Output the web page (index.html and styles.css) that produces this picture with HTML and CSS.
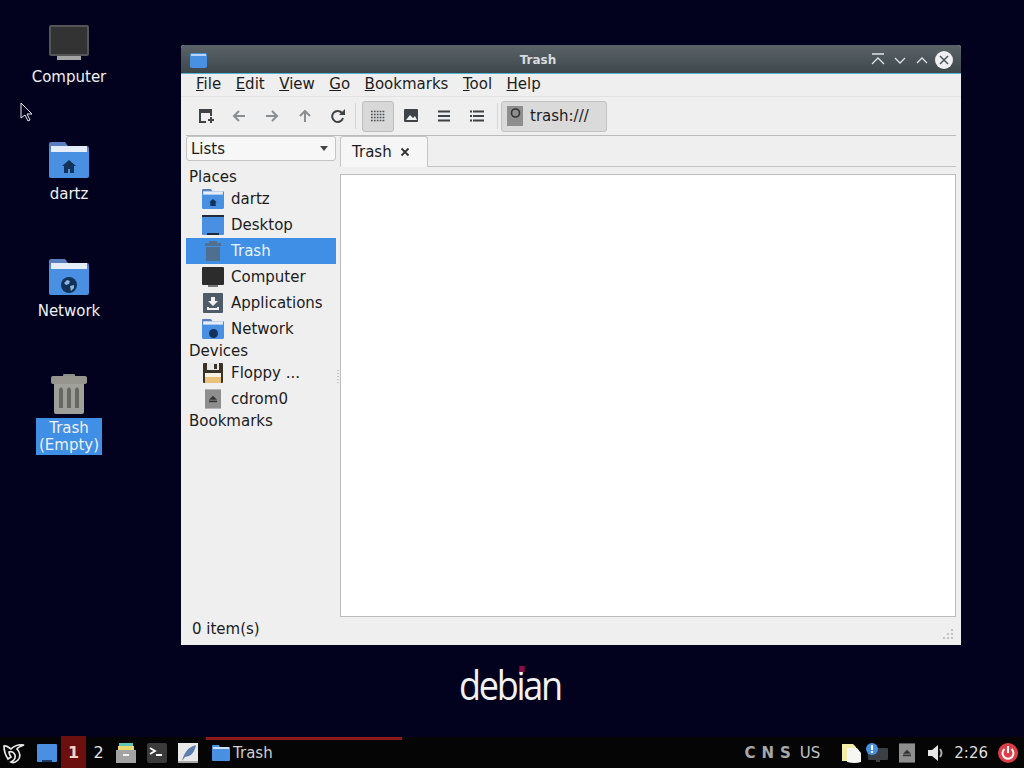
FILE: index.html
```html
<!DOCTYPE html>
<html lang="en">
<head>
<meta charset="UTF-8">
<title>Trash</title>
<link rel="stylesheet" href="styles.css">
</head>
<body>

<svg class="defs" width="0" height="0">
    <symbol id="folder" viewBox="0 0 40 36">
        <path d="M0 2q0-2 2-2h14l3 4h19q2 0 2 2v6H0z" fill="#5a7fc0"/>
        <rect x="2" y="4" width="36" height="6" fill="#e4ecf8"/>
        <path d="M0 7h40v27q0 2-2 2H2q-2 0-2-2z" fill="#4a90e2"/>
        <rect x="2" y="7" width="36" height="3" fill="#e8eef8"/>
    </symbol>
    <symbol id="monitor" viewBox="0 0 40 36">
        <rect x="0" y="0" width="40" height="31" rx="2" fill="#555558"/>
        <rect x="2" y="2" width="36" height="27" fill="#333333"/>
        <rect x="8" y="31" width="24" height="4" fill="#a4a4a4"/>
    </symbol>
    <symbol id="cd" viewBox="0 0 20 24">
        <rect width="20" height="24" fill="#8e8e8e"/>
        <path d="M10 8l5 5H5z" fill="#333"/>
        <rect x="5" y="14" width="10" height="2" fill="#333"/>
    </symbol>
</svg>

<main class="desktop">
    <div class="desk-icon icon-computer">
        <svg width="40" height="36"><use href="#monitor"/></svg>
        <span>Computer</span>
    </div>
    <div class="desk-icon icon-dartz">
        <span class="folder-wrap">
            <svg width="40" height="36"><use href="#folder"/></svg>
            <svg class="badge" width="14" height="13" viewBox="0 0 14 13"><path d="M7 0l7 6h-2v7H8V9H6v4H2V6H0z" fill="#12325a"/></svg>
        </span>
        <span>dartz</span>
    </div>
    <div class="desk-icon icon-network">
        <span class="folder-wrap">
            <svg width="40" height="36"><use href="#folder"/></svg>
            <svg class="badge" width="16" height="16" viewBox="0 0 16 16"><circle cx="8" cy="8" r="8" fill="#12325a"/><path d="M3 6l3-3 3 1-1 3-3 1zM9 9l4-1 0 3-3 3z" fill="#8fb4e0"/></svg>
        </span>
        <span>Network</span>
    </div>
    <div class="desk-icon icon-trash">
        <svg width="36" height="40" viewBox="0 0 36 40">
            <rect x="12" y="0" width="12" height="4" rx="1" fill="#8d8d88"/>
            <rect x="0" y="2" width="36" height="8" rx="2" fill="#96968f"/>
            <path d="M3 10h30v28q0 2-2 2H5q-2 0-2-2z" fill="#a0a09a"/>
            <path d="M8 15l2-2 2 2v19H8zM16 15l2-2 2 2v19h-4zM24 15l2-2 2 2v19h-4z" fill="#686862"/>
        </svg>
        <span class="selected">Trash<br>(Empty)</span>
    </div>

    <svg class="cursor" width="14" height="20" viewBox="0 0 14 20"><path d="M1 1v15l4-3 3 6 2-1-3-6h5z" fill="#02021e" stroke="#e8e8e8" stroke-width="1"/></svg>

    <div class="debian">deb<span class="debian-i">i<b></b></span>an</div>

    <section class="window">
        <div class="titlebar">
            <svg width="17" height="15" viewBox="0 0 17 15"><rect width="17" height="15" rx="2" fill="#4a90e2"/><rect x="1" y="1" width="15" height="2" fill="#b9d3f3"/></svg>
            <span class="title">Trash</span>
            <div class="wm-buttons">
                <svg width="22" height="16" viewBox="0 0 22 16"><path d="M5 2h12M5 12l6-6 6 6" fill="none" stroke="#dfe3e5" stroke-width="1.3"/></svg>
                <svg width="22" height="16" viewBox="0 0 22 16"><path d="M6 6l5 5 5-5" fill="none" stroke="#dfe3e5" stroke-width="1.3"/></svg>
                <svg width="22" height="16" viewBox="0 0 22 16"><path d="M6 11l5-5 5 5" fill="none" stroke="#dfe3e5" stroke-width="1.3"/></svg>
                <svg class="wm-close" width="18" height="18" viewBox="0 0 18 18"><circle cx="9" cy="9" r="9" fill="#eef0f1"/><path d="M5 5l8 8M13 5l-8 8" stroke="#4b5459" stroke-width="1.5"/></svg>
            </div>
        </div>

        <nav class="menubar">
            <span><u>F</u>ile</span>
            <span><u>E</u>dit</span>
            <span><u>V</u>iew</span>
            <span><u>G</u>o</span>
            <span><u>B</u>ookmarks</span>
            <span><u>T</u>ool</span>
            <span><u>H</u>elp</span>
        </nav>

        <div class="toolbar">
            <span class="tool"><svg width="16" height="16" viewBox="0 0 16 16"><path d="M1 1h13v7h-2V5H3v8h5v2H1z" fill="#3d4347"/><path d="M12 9h2v2h2v2h-2v2h-2v-2h-2v-2h2z" fill="#3d4347"/></svg></span>
            <span class="tool"><svg width="16" height="16" viewBox="0 0 16 16"><path d="M8 3L3 8l5 5M3 8h11" fill="none" stroke="#8a8e91" stroke-width="2"/></svg></span>
            <span class="tool"><svg width="16" height="16" viewBox="0 0 16 16"><path d="M8 3l5 5-5 5M13 8H2" fill="none" stroke="#8a8e91" stroke-width="2"/></svg></span>
            <span class="tool"><svg width="16" height="16" viewBox="0 0 16 16"><path d="M3 8l5-5 5 5M8 3v11" fill="none" stroke="#8a8e91" stroke-width="2"/></svg></span>
            <span class="tool"><svg width="16" height="16" viewBox="0 0 16 16"><path d="M13 10a5.500 5.500 0 1 1-1-5" fill="none" stroke="#3d4347" stroke-width="2"/><path d="M15 1v6H9z" fill="#3d4347"/></svg></span>
            <i class="tool-sep sep-view"></i>
            <span class="tool active"><svg width="14" height="12" viewBox="0 0 14 12"><path d="M0 1.500h14M0 4.500h14M0 7.500h14M0 10.500h14" stroke="#4a4f52" stroke-width="1.700" stroke-dasharray="1.700 1.200"/></svg></span>
            <span class="tool"><svg width="16" height="14" viewBox="0 0 16 14"><rect x="1" width="14" height="13" rx="1" fill="#3d4347"/><path d="M3 11l4-5 3 3 2-2 2 4z" fill="#f1f1f2"/></svg></span>
            <span class="tool"><svg width="16" height="14" viewBox="0 0 16 14"><path d="M2 2.500h12M2 7h12M2 11.500h12" stroke="#3d4347" stroke-width="2"/></svg></span>
            <span class="tool"><svg width="16" height="14" viewBox="0 0 16 14"><path d="M1 2.500h2M4 2.500h11M1 7h2M4 7h11M1 11.500h2M4 11.500h11" stroke="#3d4347" stroke-width="2"/></svg></span>
            <i class="tool-sep sep-path"></i>
            <div class="path-btn">
                <svg width="16" height="20" viewBox="0 0 16 20"><rect width="16" height="20" fill="#8e8e8e"/><circle cx="8.500" cy="7" r="4" fill="none" stroke="#333" stroke-width="1.600"/></svg>
                <span>trash:///</span>
            </div>
        </div>

        <div class="body">
            <aside class="sidebar">
                <div class="combo">Lists<i class="combo-arrow"></i></div>
                <div class="side-head">Places</div>
                <div class="side-row">
                    <span class="side-icon"><svg width="22" height="20"><use href="#folder"/></svg><svg class="side-badge" width="8" height="7" viewBox="0 0 14 13"><path d="M7 0l7 6h-2v7H2V6H0z" fill="#12325a"/></svg></span>dartz
                </div>
                <div class="side-row">
                    <span class="side-icon"><svg width="22" height="20" viewBox="0 0 22 20"><rect width="22" height="20" rx="1" fill="#4a90e2"/><rect width="22" height="2" fill="#1f2a3a"/><rect x="5" y="18" width="12" height="2" fill="#1f2a3a"/></svg></span>Desktop
                </div>
                <div class="side-row current">
                    <span class="side-icon"><svg width="22" height="20" viewBox="0 0 22 20"><rect x="7" width="8" height="2" fill="#52708f"/><rect x="3" y="2" width="16" height="3" fill="#52708f"/><rect x="4" y="6" width="14" height="14" fill="#4f6f90"/></svg></span>Trash
                </div>
                <div class="side-row">
                    <span class="side-icon"><svg width="22" height="20" viewBox="0 0 22 20"><rect width="22" height="18" rx="1" fill="#2c2c2c"/><rect x="6" y="18" width="10" height="2" fill="#777"/></svg></span>Computer
                </div>
                <div class="side-row">
                    <span class="side-icon"><svg width="20" height="20" viewBox="0 0 20 20"><rect width="20" height="20" rx="1" fill="#4d5c68"/><path d="M8 4h4v4h3l-5 5-5-5h3zM4 14h2v1h8v-1h2v3H4z" fill="#f2f2f2"/></svg></span>Applications
                </div>
                <div class="side-row">
                    <span class="side-icon"><svg width="22" height="20"><use href="#folder"/></svg><svg class="side-badge" width="9" height="9" viewBox="0 0 9 9"><circle cx="4.500" cy="4.500" r="4.500" fill="#12325a"/></svg></span>Network
                </div>
                <div class="side-head">Devices</div>
                <div class="side-row">
                    <span class="side-icon"><svg width="20" height="20" viewBox="0 0 20 20"><rect width="20" height="20" rx="1" fill="#3a3226"/><rect x="4" width="12" height="7" fill="#e8e8e8"/><rect x="11" y="1" width="3" height="5" fill="#3a3226"/><rect x="2" y="10" width="16" height="10" fill="#e8c27a"/><rect x="2" y="10" width="16" height="4" fill="#f6f1e0"/></svg></span>Floppy ...
                </div>
                <div class="side-row">
                    <span class="side-icon"><svg width="16" height="20"><use href="#cd"/></svg></span>cdrom0
                </div>
                <div class="side-head">Bookmarks</div>
            </aside>

            <div class="splitter"><i></i></div>

            <div class="content">
                <div class="tabs">
                    <div class="tab">Trash<svg width="10" height="10" viewBox="0 0 10 10"><path d="M1.500 1.500l7 7M8.500 1.500l-7 7" stroke="#333" stroke-width="1.800"/></svg></div>
                </div>
                <div class="file-view"></div>
            </div>
        </div>

        <div class="statusbar">
            <span>0 item(s)</span>
            <svg class="grip" width="10" height="10" viewBox="0 0 10 10"><path d="M8 0h2v2H8zM4 4h2v2H4zM8 4h2v2H8zM0 8h2v2H0zM4 8h2v2H4zM8 8h2v2H8z" fill="#c4c4c4"/></svg>
        </div>
    </section>
</main>

<footer class="taskbar">
    <svg class="start" width="22" height="24" viewBox="0 0 22 24"><path d="M1 5c3-1 5 2 7 3 3-3 7-5 13-4-3 1-6 2-7 4 3 3 4 8 1 11-2 2-5 3-7 2 2-1 5-3 4-7-1-3-4-4-6-3 0 2 1 3 2 5l-3 2C3 15 1 10 1 5z" fill="none" stroke="#e8e8e8" stroke-width="1.700"/></svg>
    <svg class="show-desktop" width="20" height="18" viewBox="0 0 20 18"><rect width="20" height="18" rx="1" fill="#4a90e2"/><rect x="5" y="16" width="10" height="2" fill="#1f3a60"/></svg>
    <span class="ws ws-on">1</span>
    <span class="ws">2</span>
    <span class="launch launch-first"><svg width="20" height="20" viewBox="0 0 20 20"><rect x="3" width="14" height="4" fill="#5cc6b8"/><rect x="2" y="3" width="16" height="4" fill="#e8d870"/><path d="M0 7h20v13H0z" fill="#a3a3a3"/><rect x="7" y="11" width="6" height="2" fill="#f1f1f1"/></svg></span>
    <span class="launch"><svg width="20" height="20" viewBox="0 0 20 20"><rect width="20" height="20" rx="2" fill="#3a3a3a"/><path d="M3 5l5 3-5 3" fill="none" stroke="#fff" stroke-width="1.800"/><rect x="9" y="11" width="6" height="2" fill="#fff"/></svg></span>
    <span class="launch"><svg width="20" height="20" viewBox="0 0 20 20"><rect width="20" height="20" fill="#e9e9e9"/><rect y="18" width="20" height="2" fill="#a8a8a8"/><path d="M4 18C6 10 10 4 18 2c-1 5-3 9-7 11l-4 1z" fill="#5d7fb0"/></svg></span>
    <div class="task">
        <svg width="18" height="16" viewBox="0 0 18 16"><path d="M0 1q0-1 1-1h6l1 2h9q1 0 1 1v12q0 1-1 1H1q-1 0-1-1z" fill="#4a90e2"/><rect x="1" y="2" width="16" height="2" fill="#cfe0f6"/></svg>
        Trash
    </div>
    <div class="tray">
        <span class="locks"><b>C</b><b>N</b><b>S</b></span>
        <span class="layout">US</span>
        <svg class="note" width="20" height="22" viewBox="0 0 20 22"><path d="M0 2h11l3 3v14H0z" fill="#f3eda8"/><path d="M5 6h10l4 5v9q-6 2-14 0z" fill="#f6f6f2"/></svg>
        <span class="net-icon">
            <svg width="20" height="14" viewBox="0 0 20 14"><rect width="20" height="12" rx="1" fill="#3a3f44"/><rect x="8" y="12" width="4" height="2" fill="#3a3f44"/></svg>
            <svg class="net-alert" width="12" height="12" viewBox="0 0 12 12"><circle cx="6" cy="6" r="6" fill="#4a90e2"/><rect x="5" y="2" width="2" height="5" fill="#fff"/><rect x="5" y="8" width="2" height="2" fill="#fff"/></svg>
        </span>
        <svg class="tray-cd" width="16" height="20"><use href="#cd"/></svg>
        <svg class="volume" width="18" height="16" viewBox="0 0 18 16"><path d="M0 5h4l6-5v16l-6-5H0z" fill="#e6e6e6"/><path d="M12 4q3 4 0 8" fill="none" stroke="#aaa" stroke-width="2"/></svg>
        <span class="clock">2:26</span>
        <svg width="20" height="20" viewBox="0 0 20 20"><circle cx="10" cy="10" r="10" fill="#de3e46"/><path d="M6.500 6a5.500 5.500 0 1 0 7 0" fill="none" stroke="#fff" stroke-width="2"/><rect x="9" y="3" width="2" height="7" fill="#fff"/></svg>
    </div>
</footer>

</body>
</html>
```

FILE: styles.css
```css
:root {
    --desk: #02021e;
    --panel: #efeff0;
    --line: #c9c9c9;
    --accent: #3f8fe6;
    --text: #1c1c1c;
}
* {
    box-sizing: border-box;
}
html, body {
    height: 100%;
}
body {
    margin: 0;
    display: flex;
    flex-direction: column;
    overflow: hidden;
    background: var(--desk);
    color: var(--text);
    font-family: "DejaVu Sans", sans-serif;
    font-size: 15px;
}
.defs {
    position: absolute;
}
.desktop {
    position: relative;
    flex: 1;
}

/* desktop icons */
.desk-icon {
    position: absolute;
    left: 19px;
    width: 100px;
    display: flex;
    flex-direction: column;
    align-items: center;
    color: #f0f0f0;
    line-height: 17px;
    text-align: center;
}
.desk-icon > svg, .folder-wrap {
    margin-bottom: 8px;
}
.icon-computer { top: 25px; }
.icon-dartz { top: 142px; }
.icon-network { top: 259px; }
.icon-trash { top: 374px; }
.icon-trash > svg {
    margin-bottom: 4px;
}
.folder-wrap {
    position: relative;
    display: block;
    height: 36px;
}
.folder-wrap svg {
    display: block;
}
.folder-wrap .badge {
    position: absolute;
    left: 50%;
    top: 18px;
    transform: translateX(-50%);
}
.selected {
    display: block;
    width: 66px;
    background: var(--accent);
    padding: 2px 0 1px;
    line-height: 17px;
}
.cursor {
    position: absolute;
    left: 20px;
    top: 102px;
}
.debian {
    position: absolute;
    left: 459px;
    top: 660px;
    font-family: "Open Sans", sans-serif;
    font-size: 40px;
    line-height: 50px;
    letter-spacing: -2.500px;
    color: #f2f2f2;
    transform: scaleX(.9);
    transform-origin: left;
}
.debian-i {
    position: relative;
}
.debian-i b {
    position: absolute;
    left: 3px;
    top: 9px;
    width: 6px;
    height: 6px;
    background: #8a0e45;
}

/* window */
.window {
    position: absolute;
    left: 181px;
    top: 45px;
    width: 780px;
    height: 600px;
    display: flex;
    flex-direction: column;
    background: var(--panel);
    border-radius: 3px 3px 0 0;
}
.titlebar {
    height: 29px;
    flex: none;
    display: flex;
    align-items: center;
    padding: 2px 8px 0 9px;
    position: relative;
    background: linear-gradient(#5b6368, #3d474c);
    border-bottom: 1px solid #53b4d6;
    border-radius: 3px 3px 0 0;
}
.title {
    position: absolute;
    left: 0;
    right: 66px;
    text-align: center;
    color: #d8dcde;
    font-size: 12px;
    font-weight: bold;
}
.wm-buttons {
    margin-left: auto;
    display: flex;
    align-items: center;
}
.wm-close {
    margin-left: 2px;
}
.menubar {
    height: 23px;
    flex: none;
    display: flex;
    align-items: center;
    gap: 14.500px;
    padding: 0 0 2px 15px;
    border-bottom: 1px solid #e2e2e3;
}
.toolbar {
    height: 39px;
    flex: none;
    display: flex;
    align-items: center;
    margin: 0 5px;
    padding-left: 3px;
    border-bottom: 1px solid #bcbcbc;
}
.tool {
    width: 33px;
    height: 31px;
    display: flex;
    align-items: center;
    justify-content: center;
}
.tool.active {
    width: 32px;
    background: #d8d8d9;
    border: 1px solid #bdbdbd;
    border-radius: 3px;
}
.tool-sep {
    width: 1px;
    height: 26px;
    background: #d5d5d5;
}
.sep-view {
    margin: 0 6px 0 1px;
}
.sep-path {
    margin: 0 3px 0 4px;
}
.path-btn {
    width: 106px;
    height: 31px;
    display: flex;
    align-items: center;
    gap: 7px;
    padding-left: 5px;
    background: #dadadb;
    border: 1px solid #c2c2c2;
    border-radius: 3px;
}

/* sidebar and tabs */
.body {
    flex: 1;
    display: flex;
    padding: 0 5px;
    min-height: 0;
}
.sidebar {
    width: 150px;
    flex: none;
}
.combo {
    height: 25px;
    display: flex;
    align-items: center;
    justify-content: space-between;
    padding: 0 7px 0 4px;
    margin-bottom: 7px;
    background: #f7f7f7;
    border: 1px solid #c4c4c4;
    border-radius: 3px;
}
.combo-arrow {
    width: 0;
    height: 0;
    border: 4px solid transparent;
    border-top: 5px solid #444;
    border-bottom: 0;
}
.side-head {
    height: 18px;
    line-height: 18px;
    padding-left: 3px;
}
.side-row {
    height: 26px;
    display: flex;
    align-items: center;
    padding-left: 16px;
}
.side-row.current {
    background: var(--accent);
    color: #eaf3fd;
}
.side-icon {
    position: relative;
    width: 22px;
    height: 20px;
    margin-right: 7px;
    display: flex;
    justify-content: center;
}
.side-badge {
    position: absolute;
    left: 7px;
    top: 10px;
}
.splitter {
    width: 4px;
    flex: none;
    display: flex;
    align-items: center;
    justify-content: center;
}
.splitter i {
    width: 2px;
    height: 14px;
    background: repeating-linear-gradient(#c2c2c2 0 1px, transparent 1px 3px);
}
.content {
    flex: 1;
    display: flex;
    flex-direction: column;
}
.tabs {
    height: 31px;
    flex: none;
    margin-bottom: 7px;
    border-bottom: 1px solid #c4c4c4;
}
.tab {
    width: 88px;
    height: 31px;
    display: flex;
    align-items: center;
    gap: 8px;
    padding-left: 11px;
    background: #f6f6f6;
    border: 1px solid #c4c4c4;
    border-bottom: 0;
    border-radius: 3px 3px 0 0;
}
.file-view {
    flex: 1;
    background: #fff;
    border: 1px solid #bcbcbc;
}
.statusbar {
    height: 28px;
    flex: none;
    display: flex;
    align-items: center;
    justify-content: space-between;
    padding: 0 8px 4px 11px;
}
.grip {
    margin-top: 10px;
}

/* panel */
.taskbar {
    height: 32px;
    flex: none;
    position: relative;
    display: flex;
    align-items: center;
    background: linear-gradient(var(--desk) 1px, #050506 1px);
    color: #e6e6e6;
    font-size: 16px;
}
.start {
    margin: 2px 12px 0 3px;
}
.show-desktop {
    margin-right: 4px;
    margin-top: 2px;
}
.ws {
    width: 25px;
    height: 32px;
    display: flex;
    align-items: center;
    justify-content: center;
}
.ws-on {
    background: #6b0f0f;
    color: #f3d5c8;
    font-weight: bold;
}
.launch {
    width: 31px;
    display: flex;
    justify-content: center;
    margin-top: 2px;
}
.launch-first {
    margin-left: -1px;
}
.task {
    position: absolute;
    left: 206px;
    top: 1px;
    width: 196px;
    height: 31px;
    display: flex;
    align-items: center;
    gap: 3px;
    padding: 0 0 2px 6px;
    border-top: 3px solid #8b1a1a;
    color: #cfcfcf;
    font-size: 15px;
}
.tray {
    margin-left: auto;
    display: flex;
    align-items: center;
    gap: 11px;
    padding: 2px 6px 0 0;
    font-size: 15px;
}
.locks {
    display: flex;
    gap: 6px;
    color: #a8a8a8;
}
.layout {
    color: #c4c4c4;
    margin: 0 11px 0 -2px;
}
.note {
    margin-right: -5px;
}
.net-icon {
    position: relative;
    display: flex;
    margin-top: 4px;
}
.net-alert {
    position: absolute;
    left: -2px;
    top: -5px;
}
.tray-cd {
    margin-right: 2px;
}
.volume {
    margin-right: -3px;
}
.clock {
    color: #dedede;
    margin-right: -1px;
}
```
